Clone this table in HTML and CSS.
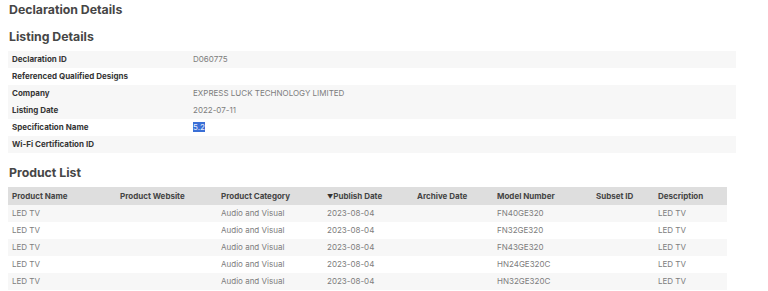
FILE: index.html
```html
<!DOCTYPE html>
<html>
<head>
<meta charset="utf-8">
<link rel="stylesheet" href="styles.css">
</head>
<body>
<div class="page">
  <h1 class="title">Declaration Details</h1>
  <h2 class="section">Listing Details</h2>
  <div class="listing">
    <div class="row shade"><div class="label">Declaration ID</div><div class="value">D060775</div></div>
    <div class="row"><div class="label">Referenced Qualified Designs</div><div class="value"></div></div>
    <div class="row shade"><div class="label">Company</div><div class="value">EXPRESS LUCK TECHNOLOGY LIMITED</div></div>
    <div class="row shade"><div class="label">Listing Date</div><div class="value">2022-07-11</div></div>
    <div class="row"><div class="label">Specification Name</div><div class="value"><span class="sel">5.2</span></div></div>
    <div class="row shade"><div class="label">Wi-Fi Certification ID</div><div class="value"></div></div>
  </div>
  <h2 class="section product">Product List</h2>
  <table class="products">
    <thead>
      <tr>
        <th class="c1">Product Name</th>
        <th class="c2">Product Website</th>
        <th class="c3">Product Category</th>
        <th class="c4"><span class="arrow">&#9660;</span>Publish Date</th>
        <th class="c5">Archive Date</th>
        <th class="c6">Model Number</th>
        <th class="c7">Subset ID</th>
        <th class="c8">Description</th>
      </tr>
    </thead>
    <tbody>
      <tr><td>LED TV</td><td></td><td>Audio and Visual</td><td>2023-08-04</td><td></td><td>FN40GE320</td><td></td><td>LED TV</td></tr>
      <tr><td>LED TV</td><td></td><td>Audio and Visual</td><td>2023-08-04</td><td></td><td>FN32GE320</td><td></td><td>LED TV</td></tr>
      <tr><td>LED TV</td><td></td><td>Audio and Visual</td><td>2023-08-04</td><td></td><td>FN43GE320</td><td></td><td>LED TV</td></tr>
      <tr><td>LED TV</td><td></td><td>Audio and Visual</td><td>2023-08-04</td><td></td><td>HN24GE320C</td><td></td><td>LED TV</td></tr>
      <tr><td>LED TV</td><td></td><td>Audio and Visual</td><td>2023-08-04</td><td></td><td>HN32GE320C</td><td></td><td>LED TV</td></tr>
    </tbody>
  </table>
</div>
</body>
</html>
```

FILE: styles.css
```css
html, body {
  margin: 0;
  padding: 0;
  background: #fff;
}
body {
  font-family: "Inter", "Liberation Sans", sans-serif;
  color: #444;
}
.page {
  padding: 0 8px;
}
.title,
.section {
  margin: 0;
  padding-left: 1px;
  font-size: 12.3px;
  font-weight: 700;
  line-height: 16px;
  color: #464646;
}
.title {
  padding-top: 2px;
  margin-bottom: 10.6px;
}
.section {
  margin-bottom: 6.4px;
}
.section.product {
  margin-top: 11.6px;
}
.listing {
  width: 728px;
}
.row {
  display: flex;
  height: 17px;
  align-items: center;
  font-size: 8px;
}
.row.shade {
  background: #f7f7f7;
}
.label {
  width: 181px;
  padding-left: 4px;
  font-weight: 700;
  color: #353535;
}
.value {
  color: #7d7d7d;
}
.sel {
  background: #3a6fd6;
  color: #e8eefc;
}
.products {
  border-collapse: collapse;
  width: 719px;
  font-size: 8px;
  table-layout: fixed;
}
.products th {
  background: #dedede;
  height: 18px;
  text-align: left;
  font-weight: 700;
  color: #444;
  padding: 0 0 0 4px;
}
.products td {
  height: 17px;
  padding: 0 0 0 4px;
  color: #7d7d7d;
}
.products tbody tr:nth-child(odd) td {
  background: #f7f7f7;
}
.arrow {
  font-size: 6px;
  color: #333;
}
.c1 { width: 104px; }
.c2 { width: 97px; }
.c3 { width: 102px; }
.c4 { width: 86px; }
.c5 { width: 76px; }
.c6 { width: 95px; }
.c7 { width: 58px; }
```
